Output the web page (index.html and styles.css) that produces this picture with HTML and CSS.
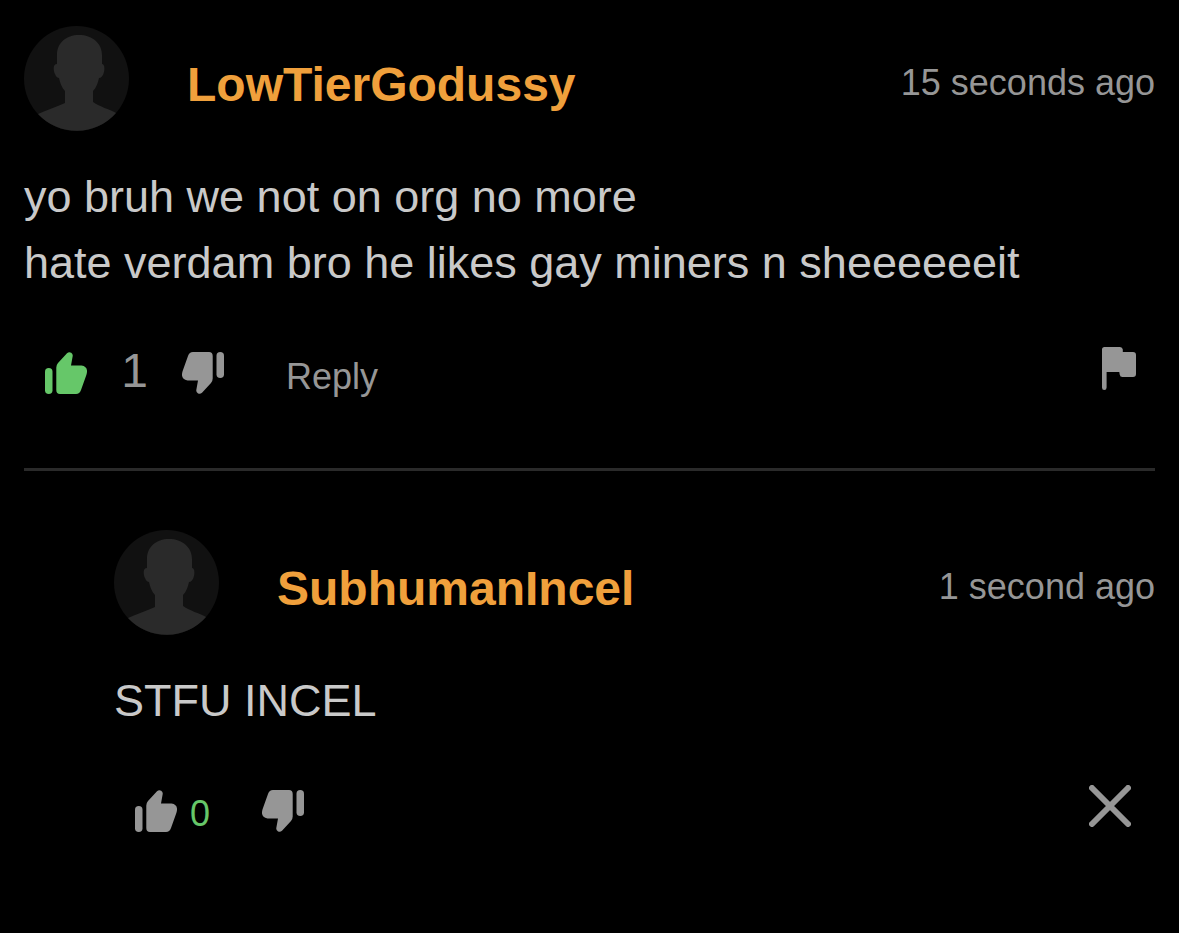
FILE: index.html
```html
<!DOCTYPE html>
<html lang="en">
<head>
  <meta charset="UTF-8">
  <meta name="viewport" content="width=device-width, initial-scale=1.0">
  <title>Comments</title>
  <link rel="stylesheet" href="styles.css">
</head>
<body>

<!-- Shared icons -->
<svg class="sprite" aria-hidden="true">
  <symbol id="avatar" viewBox="0 0 105 105">
    <circle cx="52.5" cy="52.5" r="52.5" fill="#111111"/>
    <path fill="#2a2a2a" d="M55 9C42 9 33 17 33 29V38C29 38 29 44 31 48C32 51 34 52 35 52C36 57 38 62 41 65V77C33 81 22 84 14 88A52.5 52.5 0 0 0 92 87C85 83 76 81 69 76V65C72 62 74 57 75 52C77 52 79 50 80 46C81 41 80 38 78 38V29C78 17 68 9 55 9Z"/>
  </symbol>
  <symbol id="thumb" viewBox="0 0 42 42">
    <rect x="0" y="16" width="7.5" height="26" rx="3.75"/>
    <path d="M11.300 15.500Q11.300 13 13 11L22 1.200Q24 -.6 26.200 .7Q28 2 27.700 4L26 13.500H36.500Q42.500 14.500 42 20Q41.800 22 41 24L36 38Q34.700 42 31 42H15Q11.300 42 11.300 38Z"/>
  </symbol>
  <symbol id="flag" viewBox="0 0 34 43">
    <path d="M2.500 0H18Q20.500 0 20.800 2.500V5H31Q34 5 34 8V27Q34 30 31 30H20.500Q18 30 17.700 27.500L17.300 25H4.600V40.500Q4.600 43 2.300 43Q0 43 0 40.500V2.500Q0 0 2.500 0Z"/>
  </symbol>
  <symbol id="close" viewBox="0 0 42 42">
    <path d="M3 3L39 39M39 3L3 39" fill="none" stroke="currentColor" stroke-width="6" stroke-linecap="round"/>
  </symbol>
</svg>

<main class="comments">

  <article class="comment">
    <header class="comment-header">
      <svg class="avatar" aria-hidden="true"><use href="#avatar"/></svg>
      <a class="username" href="#">LowTierGodussy</a>
      <time class="time">15 seconds ago</time>
    </header>
    <p class="message">yo bruh we not on org no more<br>hate verdam bro he likes gay miners n sheeeeeeit</p>
    <footer class="actions">
      <button type="button" class="icon-btn active" aria-label="Like"><svg class="icon" aria-hidden="true"><use href="#thumb"/></svg></button>
      <span class="votes">1</span>
      <button type="button" class="icon-btn" aria-label="Dislike"><svg class="icon down" aria-hidden="true"><use href="#thumb"/></svg></button>
      <button type="button" class="reply-btn">Reply</button>
      <button type="button" class="icon-btn side-btn" aria-label="Report"><svg class="icon flag" aria-hidden="true"><use href="#flag"/></svg></button>
    </footer>
  </article>

  <article class="comment comment-reply">
    <header class="comment-header">
      <svg class="avatar" aria-hidden="true"><use href="#avatar"/></svg>
      <a class="username" href="#">SubhumanIncel</a>
      <time class="time">1 second ago</time>
    </header>
    <p class="message">STFU INCEL</p>
    <footer class="actions">
      <button type="button" class="icon-btn" aria-label="Like"><svg class="icon" aria-hidden="true"><use href="#thumb"/></svg></button>
      <span class="votes votes-small">0</span>
      <button type="button" class="icon-btn" aria-label="Dislike"><svg class="icon down" aria-hidden="true"><use href="#thumb"/></svg></button>
      <button type="button" class="icon-btn side-btn close-btn" aria-label="Delete"><svg class="icon" aria-hidden="true"><use href="#close"/></svg></button>
    </footer>
  </article>

</main>

</body>
</html>
```
FILE: styles.css
```css
* {
  box-sizing: border-box;
}

body {
  margin: 0;
  background: #000;
  color: #c9c9c9;
  font-family: Arial, "Liberation Sans", sans-serif;
}

.sprite {
  display: none;
}

.comments {
  padding: 26px 24px;
}

.comment {
  padding-bottom: 74px;
}

/* Nested answer */
.comment-reply {
  padding-top: 59px;
  padding-left: 90px;
  border-top: 3px solid #2a2a2a;
}

.comment-header {
  display: flex;
  align-items: center;
}

.avatar {
  width: 105px;
  height: 105px;
  flex: none;
}

.username {
  margin-left: 58px;
  padding-top: 12px;
  color: #f0a03c;
  font-size: 48px;
  font-weight: bold;
  text-decoration: none;
}

.time {
  margin-left: auto;
  padding-top: 9px;
  color: #969696;
  font-size: 36px;
}

.message {
  margin: 33px 0 0;
  font-size: 45px;
  line-height: 66px;
}

/* Like, dislike, reply and report */
.actions {
  display: flex;
  align-items: flex-end;
  height: 47px;
  margin-top: 51px;
  padding-left: 21px;
  color: #969696;
}

.icon-btn,
.reply-btn {
  padding: 0;
  border: none;
  background: none;
  color: inherit;
  font-family: inherit;
  cursor: pointer;
}

.icon {
  display: block;
  width: 42px;
  height: 42px;
  fill: currentColor;
}

.down {
  transform: rotate(180deg);
}

.active {
  color: #66c769;
}

.votes {
  width: 95px;
  text-align: center;
  font-size: 48px;
  line-height: 46px;
}

.votes-small {
  width: 85px;
  padding-left: 13px;
  text-align: left;
  color: #66c769;
  font-size: 36px;
  line-height: 36px;
}

.reply-btn {
  margin-left: 62px;
  font-size: 36px;
  line-height: 34px;
}

.side-btn {
  align-self: flex-start;
  margin-left: auto;
  margin-right: 19px;
}

.close-btn {
  margin-right: 24px;
}

.flag {
  width: 34px;
  height: 43px;
}
```
